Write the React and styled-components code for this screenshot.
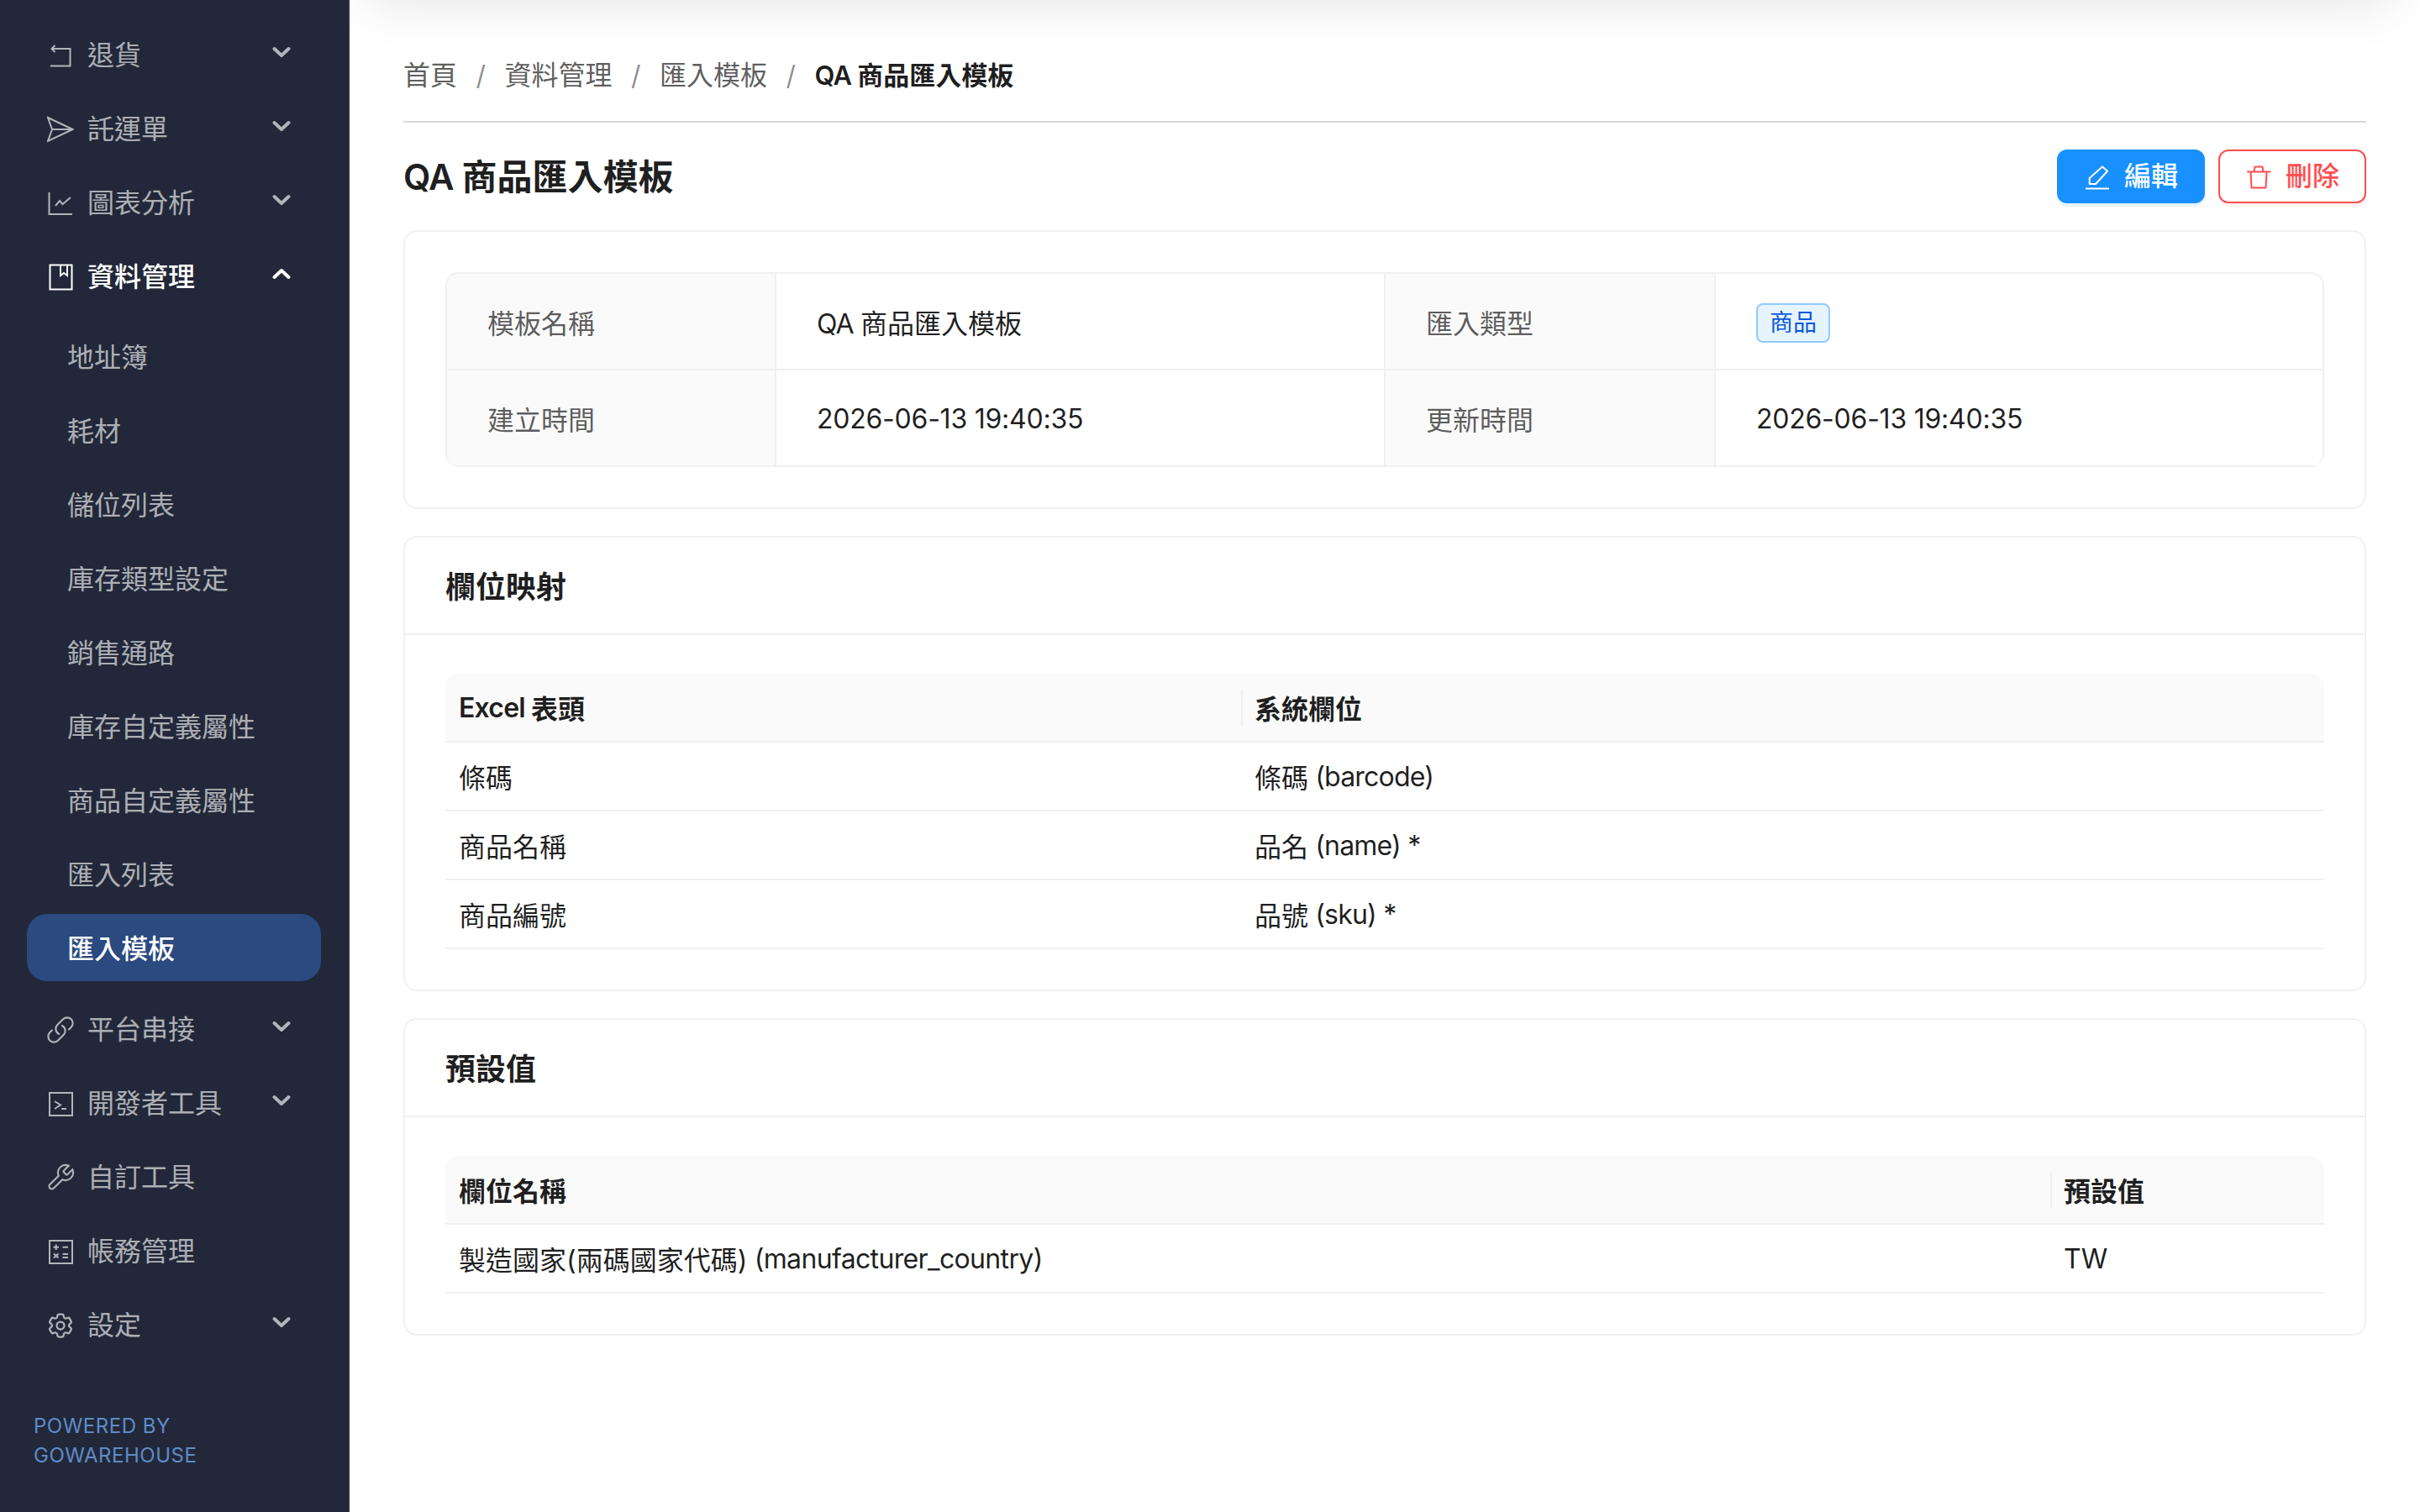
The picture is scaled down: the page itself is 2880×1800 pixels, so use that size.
import React from 'react';
import styled, { createGlobalStyle } from 'styled-components';
import { HiOutlineCog6Tooth, HiOutlineLink } from 'react-icons/hi2';

const Global = createGlobalStyle`
  * { box-sizing: border-box; }
  html, body { margin: 0; padding: 0; background: #fff; }
  body {
    font-family: Inter, "Noto Sans CJK TC", "Noto Sans CJK SC", sans-serif;
    font-size: 32px;
    color: rgba(0,0,0,.88);
  }
`;

const Shell = styled.div`
  display: flex;
  width: 2880px;
  height: 1800px;
  overflow: hidden;
`;

const Sidebar = styled.aside`
  flex: 0 0 416px;
  background: #222839;
  border-right: 2px solid #2b3245;
  padding-top: 26px;
  display: flex;
  flex-direction: column;
  position: relative;
  z-index: 2;
`;

const Nav = styled.nav`
  display: flex;
  flex-direction: column;
  gap: 8px;
`;

const MenuItem = styled.div`
  height: 80px;
  display: flex;
  align-items: center;
  gap: 16px;
  padding: 0 68px 0 56px;
  color: ${p => (p.$open ? '#fff' : 'rgba(255,255,255,.65)')};
  font-weight: ${p => (p.$open ? 500 : 400)};
  line-height: 48px;
`;

const MenuLabel = styled.span`
  flex: 1;
`;

const SubList = styled.div`
  display: flex;
  flex-direction: column;
  gap: 8px;
  margin: 14px 0 18px;
`;

const SubItem = styled.div`
  height: 80px;
  margin: 0 32px;
  padding: 0 0 2px 48px;
  display: flex;
  align-items: center;
  border-radius: 24px;
  color: ${p => (p.$active ? '#fff' : 'rgba(255,255,255,.65)')};
  font-weight: ${p => (p.$active ? 500 : 400)};
  background: ${p => (p.$active ? '#2a4a80' : 'transparent')};
`;

const Footer = styled.div`
  margin: 62px 0 0 40px;
  font-size: 24px;
  line-height: 35px;
  letter-spacing: .5px;
  color: #5f8bc8;
`;

const Main = styled.main`
  flex: 1;
  min-width: 0;
  padding: 0 64px;
  position: relative;
`;

const TopShadow = styled.div`
  position: absolute;
  top: -60px;
  left: 24px;
  right: 32px;
  height: 60px;
  box-shadow: 0 0 64px rgba(0,0,0,.12);
`;

const Lat = styled.span`
  letter-spacing: ${p => p.$ls || '-.8px'};
`;

const Stamp = styled.span`
  letter-spacing: -.24px;
  padding-top: 2px;
`;

const Breadcrumb = styled.div`
  height: 146px;
  padding-top: 64px;
  border-bottom: 2px solid #d9d9d9;
  display: flex;
  align-items: flex-start;
  line-height: 52px;
`;

const Crumb = styled.span`
  color: ${p => (p.$current ? 'rgba(0,0,0,.88)' : 'rgba(0,0,0,.65)')};
  font-weight: ${p => (p.$current ? 600 : 400)};
  font-size: ${p => (p.$current ? '31px' : '32px')};
`;

const Slash = styled.span`
  color: rgba(0,0,0,.45);
  width: 56.5px;
  text-align: center;
`;

const TitleRow = styled.div`
  display: flex;
  align-items: center;
  justify-content: space-between;
  height: 64px;
  margin: 32px 0;
`;

const Title = styled.h1`
  margin: 0;
  padding-top: 2px;
  font-size: 42px;
  font-weight: 600;
  line-height: 64px;
`;

const Actions = styled.div`
  display: flex;
  gap: 16px;
`;

const Button = styled.button`
  width: 176px;
  height: 64px;
  padding: 0;
  border-radius: 12px;
  font: inherit;
  font-weight: 500;
  line-height: 1;
  display: flex;
  align-items: center;
  justify-content: center;
  gap: 16px;
  background: ${p => (p.$danger ? '#fff' : '#1890ff')};
  color: ${p => (p.$danger ? '#ff4d4f' : '#fff')};
  border: 2px solid ${p => (p.$danger ? '#ff4d4f' : '#1890ff')};
  box-shadow: 0 4px 0 ${p => (p.$danger ? 'rgba(255,38,5,.06)' : 'rgba(5,145,255,.1)')};
`;

const Card = styled.section`
  border: 2px solid #f0f0f0;
  border-radius: 16px;
  margin-bottom: 32px;
`;

const CardHead = styled.div`
  height: 116px;
  padding: 0 48px 2px;
  display: flex;
  align-items: center;
  font-size: 36px;
  font-weight: 600;
  border-bottom: 2px solid #f0f0f0;
`;

const CardBody = styled.div`
  padding: ${p => (p.$tight ? '46px 48px 48px' : '48px')};
`;

const Details = styled.div`
  display: grid;
  grid-template-columns: 392px 725px 393px 1fr;
  grid-auto-rows: 115px;
  border: 2px solid #f0f0f0;
  border-bottom: 0;
  border-radius: 16px;
  overflow: hidden;
`;

const DetailCell = styled.div`
  display: flex;
  align-items: center;
  padding: 0 48px;
  border-bottom: 2px solid #f0f0f0;
  border-right: 2px solid #f0f0f0;
  background: ${p => (p.$label ? '#fafafa' : '#fff')};
  color: ${p => (p.$label ? 'rgba(0,0,0,.65)' : 'rgba(0,0,0,.88)')};
  &:nth-child(4n) { border-right: 0; }
`;

const Tag = styled.span`
  display: inline-block;
  height: 47px;
  margin-top: 4px;
  padding: 0 14px;
  border: 2px solid #91caff;
  border-radius: 8px;
  background: #e6f4ff;
  color: #0958d9;
  font-size: 28px;
  line-height: 43px;
`;

const DataTable = styled.div`
  display: grid;
  grid-template-columns: ${p => p.$cols};
`;

const HeadCell = styled.div`
  height: 82px;
  display: flex;
  align-items: center;
  padding: 0 16px;
  background: #fafafa;
  font-weight: 600;
  border-bottom: 2px solid #f0f0f0;
  position: relative;
  white-space: pre;
  &:first-child { border-top-left-radius: 16px; }
  &:nth-child(2) { border-top-right-radius: 16px; }
  &:nth-child(2)::before {
    content: '';
    position: absolute;
    left: 0;
    top: 19px;
    height: 44px;
    width: 2px;
    background: #f0f0f0;
  }
`;

const Cell = styled.div`
  height: 82px;
  display: flex;
  align-items: center;
  padding: 0 16px;
  border-bottom: 2px solid #f0f0f0;
  white-space: pre;
`;

const Glyph = styled.svg`
  width: 32px;
  height: 32px;
  flex: none;
  fill: none;
  stroke: currentColor;
  stroke-width: 2;
`;

const WideGlyph = styled(Glyph)`
  width: 36px;
  height: 36px;
  margin: 0 -2px;
  stroke-width: 1.4;
`;

const Chevron = styled.svg`
  width: 22px;
  height: 14px;
  flex: none;
  fill: none;
  stroke: currentColor;
  stroke-width: 4;
  stroke-linecap: round;
  stroke-linejoin: round;
  margin-top: -8px;
`;

const Icons = {
  back: <Glyph viewBox="0 0 32 32"><path d="M9.5 4 5.5 8l4 4M6 8h21.5v20.5H4" /></Glyph>,
  send: <Glyph viewBox="0 0 32 32"><path strokeLinejoin="miter" d="M1 2 30.5 16 1 30 6 16Zm5 14h24.5" /></Glyph>,
  chart: <Glyph viewBox="0 0 32 32"><path d="M2.5 3v26H30M10 19l5-6 3.5 4L28 9" /></Glyph>,
  book: <Glyph viewBox="0 0 32 32"><path d="M3.5 1.5h26v29h-26zM16 2v12l4-3 4 3V2" /></Glyph>,
  link: <HiOutlineLink size={36} strokeWidth={1.4} style={{ flex: 'none', margin: '0 -2px' }} />,
  term: <Glyph viewBox="0 0 32 32"><path d="M3 3h27v27H3zM9 13l7 4.5L9 22M17 22h6" /></Glyph>,
  wrench: (
    <WideGlyph viewBox="0 0 24 24">
      <path d="M14.7 6.3a1 1 0 0 0 0 1.4l1.6 1.6a1 1 0 0 0 1.4 0l3.77-3.77a6 6 0 0 1-7.94 7.94l-6.91 6.91a2.12 2.12 0 0 1-3-3l6.91-6.91a6 6 0 0 1 7.94-7.94l-3.76 3.76z" />
    </WideGlyph>
  ),
  calc: <Glyph viewBox="0 0 32 32"><path d="M3 3h27v27H3zM7.5 10.7h6.5M10.7 7.5v6.5M18.5 10.7h6.5M8 18.5l5.5 5M13.5 18.5l-5.5 5M18.5 19h6.5M18.5 23h6.5" /></Glyph>,
  gear: <HiOutlineCog6Tooth size={36} strokeWidth={1.5} style={{ flex: 'none', margin: '0 -2px' }} />,
};

const Down = () => <Chevron viewBox="0 0 22 14"><path d="M2.5 3 11 11l8.5-8" /></Chevron>;
const Up = () => <Chevron viewBox="0 0 22 14"><path d="M2.5 11 11 3l8.5 8" /></Chevron>;

const PenIcon = () => (
  <Glyph viewBox="0 0 32 32"><path strokeLinejoin="round" d="M6.7 25v-7L22 4.5l6 5.2L14 25ZM2 30.5h28" /></Glyph>
);
const TrashIcon = () => (
  <Glyph viewBox="0 0 32 32" style={{ strokeLinecap: 'round', strokeLinejoin: 'round' }}>
    <path d="M3 10.5h26.7M10.5 10l1-5.5h9l1 5.5M6.5 11l1 18.5h17l1-18.5" />
  </Glyph>
);

const MenuRow = ({ icon, label, chevron, open }) => (
  <MenuItem $open={open}>
    {Icons[icon]}
    <MenuLabel>{label}</MenuLabel>
    {chevron === 'down' && <Down />}
    {chevron === 'up' && <Up />}
  </MenuItem>
);

const subs = ['地址簿', '耗材', '儲位列表', '庫存類型設定', '銷售通路', '庫存自定義屬性', '商品自定義屬性', '匯入列表', '匯入模板'];
const mappings = [
  ['條碼', '條碼', ' (barcode)'],
  ['商品名稱', '品名', ' (name) *'],
  ['商品編號', '品號', ' (sku) *'],
];
const stamp = '2026-06-13 19:40:35';

export default function App() {
  return (
    <Shell>
      <Global />
      <Sidebar>
        <Nav>
          <MenuRow icon="back" label="退貨" chevron="down" />
          <MenuRow icon="send" label="託運單" chevron="down" />
          <MenuRow icon="chart" label="圖表分析" chevron="down" />
          <MenuRow icon="book" label="資料管理" chevron="up" open />
        </Nav>
        <SubList>
          {subs.map(s => <SubItem key={s} $active={s === '匯入模板'}>{s}</SubItem>)}
        </SubList>
        <Nav>
          <MenuRow icon="link" label="平台串接" chevron="down" />
          <MenuRow icon="term" label="開發者工具" chevron="down" />
          <MenuRow icon="wrench" label="自訂工具" />
          <MenuRow icon="calc" label="帳務管理" />
          <MenuRow icon="gear" label="設定" chevron="down" />
        </Nav>
        <Footer>POWERED BY<br />GOWAREHOUSE</Footer>
      </Sidebar>
      <Main>
        <TopShadow />
        <Breadcrumb>
          <Crumb>首頁</Crumb><Slash>/</Slash>
          <Crumb>資料管理</Crumb><Slash>/</Slash>
          <Crumb>匯入模板</Crumb><Slash>/</Slash>
          <Crumb $current><Lat>QA </Lat>商品匯入模板</Crumb>
        </Breadcrumb>
        <TitleRow>
          <Title><Lat>QA </Lat>商品匯入模板</Title>
          <Actions>
            <Button><PenIcon />編輯</Button>
            <Button $danger><TrashIcon />刪除</Button>
          </Actions>
        </TitleRow>
        <Card>
          <CardBody>
            <Details>
              <DetailCell $label>模板名稱</DetailCell>
              <DetailCell><span><Lat>QA </Lat>商品匯入模板</span></DetailCell>
              <DetailCell $label>匯入類型</DetailCell>
              <DetailCell><Tag>商品</Tag></DetailCell>
              <DetailCell $label>建立時間</DetailCell>
              <DetailCell><Stamp>{stamp}</Stamp></DetailCell>
              <DetailCell $label>更新時間</DetailCell>
              <DetailCell><Stamp>{stamp}</Stamp></DetailCell>
            </Details>
          </CardBody>
        </Card>
        <Card>
          <CardHead>欄位映射</CardHead>
          <CardBody $tight>
            <DataTable $cols="947px 1fr">
              <HeadCell><Lat>Excel </Lat>表頭</HeadCell>
              <HeadCell>系統欄位</HeadCell>
              {mappings.map(([a, b, c]) => (
                <React.Fragment key={a}>
                  <Cell>{a}</Cell>
                  <Cell>{b}<Lat>{c}</Lat></Cell>
                </React.Fragment>
              ))}
            </DataTable>
          </CardBody>
        </Card>
        <Card>
          <CardHead>預設值</CardHead>
          <CardBody $tight>
            <DataTable $cols="1910px 1fr">
              <HeadCell>欄位名稱</HeadCell>
              <HeadCell>預設值</HeadCell>
              <Cell>製造國家(兩碼國家代碼)<Lat $ls="-.65px"> (manufacturer_country)</Lat></Cell>
              <Cell>TW</Cell>
            </DataTable>
          </CardBody>
        </Card>
      </Main>
    </Shell>
  );
}
